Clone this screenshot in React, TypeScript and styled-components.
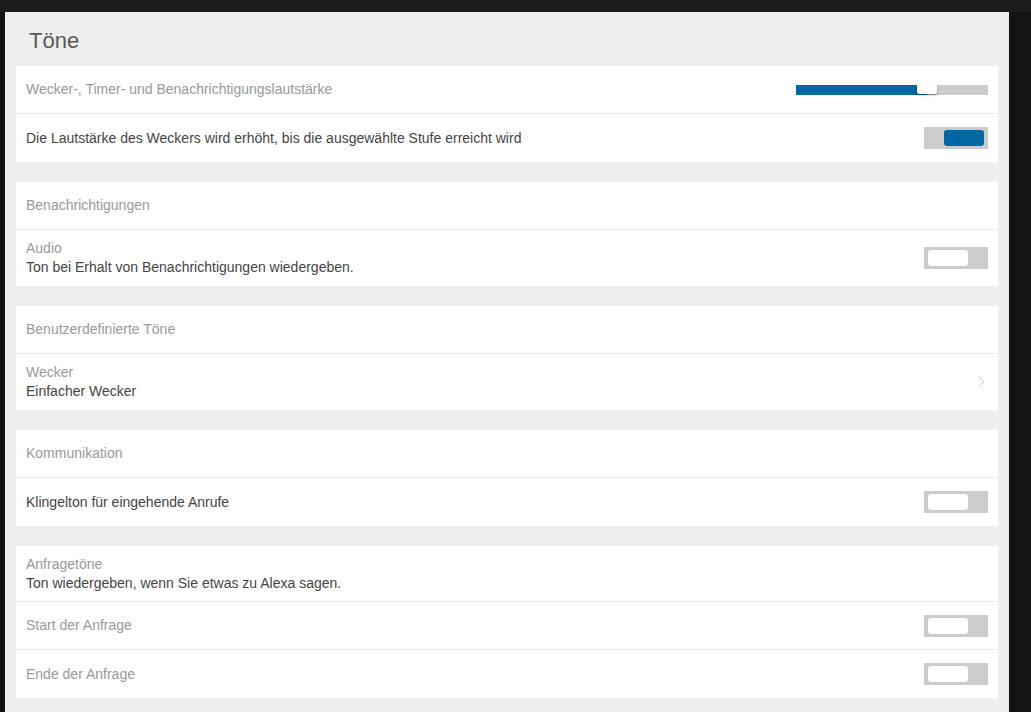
import React, { useState } from 'react';
import styled, { createGlobalStyle } from 'styled-components';

const GlobalStyle = createGlobalStyle`
  html, body {
    margin: 0;
    padding: 0;
    background: #141414;
    font-family: "Liberation Sans", Arial, sans-serif;
    overflow: hidden;
  }
`;

const Page = styled.div`
  width: 1031px;
  height: 712px;
  display: flex;
  flex-direction: column;
  background: #141414;
`;

const TopStrip = styled.div`
  height: 12px;
  flex-shrink: 0;
  background: #1b1b1b;
`;

const Body = styled.div`
  flex: 1;
  display: flex;
  background: linear-gradient(to right, #111 0, #111 5px, transparent 5px);
`;

const Panel = styled.div`
  margin-left: 5px;
  width: 1004px;
  box-sizing: border-box;
  padding: 0 11px;
  background: #eeeeee;
  display: flex;
  flex-direction: column;
  gap: 20px;
`;

const Title = styled.h1`
  margin: 0 0 -20px;
  height: 54px;
  box-sizing: border-box;
  padding: 16px 0 0 13px;
  font-size: 22px;
  font-weight: normal;
  color: #5a5a5a;
`;

const Card = styled.div`
  background: #fff;
  display: flex;
  flex-direction: column;
`;

const Row = styled.div<{ tall?: boolean }>`
  height: ${p => (p.tall ? 56 : 48)}px;
  box-sizing: border-box;
  padding: 0 10px;
  display: flex;
  align-items: center;
  justify-content: space-between;
  &:not(:last-child) {
    border-bottom: 1px solid #ececec;
  }
`;

const Texts = styled.div`
  display: flex;
  flex-direction: column;
  font-size: 14px;
  line-height: 19px;
`;

const Label = styled.span<{ muted?: boolean }>`
  color: ${p => (p.muted ? '#999' : '#444')};
`;

const Track = styled.div`
  position: relative;
  width: 192px;
  height: 10px;
  background: #cccccc;
`;

const Fill = styled.div`
  height: 100%;
  background: #0067a5;
`;

const Thumb = styled.div`
  position: absolute;
  top: -2px;
  width: 20px;
  height: 11px;
  border-radius: 2px;
  background: #fff;
  box-shadow: 0 1px 2px rgba(0, 0, 0, 0.45);
  transform: translateX(-50%);
`;

const ToggleBox = styled.button<{ on: boolean }>`
  width: 64px;
  height: 22px;
  padding: 3px 4px;
  border: none;
  background: #cccccc;
  display: flex;
  justify-content: ${p => (p.on ? 'flex-end' : 'flex-start')};
  cursor: pointer;
  box-sizing: border-box;
`;

const Knob = styled.span<{ on: boolean }>`
  width: 40px;
  height: 16px;
  border-radius: 3px;
  background: ${p => (p.on ? '#0067a5' : '#fff')};
`;

const Chevron = styled.svg`
  margin-right: 3px;
`;

const Toggle: React.FC<{ initial?: boolean }> = ({ initial = false }) => {
  const [on, setOn] = useState(initial);
  return (
    <ToggleBox on={on} onClick={() => setOn(!on)}>
      <Knob on={on} />
    </ToggleBox>
  );
};

const Slider: React.FC<{ value: number }> = ({ value }) => (
  <Track>
    <Fill style={{ width: `${value}%` }} />
    <Thumb style={{ left: `${value}%` }} />
  </Track>
);

export default function App() {
  return (
    <>
      <GlobalStyle />
      <Page>
        <TopStrip />
        <Body>
          <Panel>
            <Title>Töne</Title>

            <Card>
              <Row>
                <Texts>
                  <Label muted>Wecker-, Timer- und Benachrichtigungslautstärke</Label>
                </Texts>
                <Slider value={68} />
              </Row>
              <Row>
                <Texts>
                  <Label>Die Lautstärke des Weckers wird erhöht, bis die ausgewählte Stufe erreicht wird</Label>
                </Texts>
                <Toggle initial />
              </Row>
            </Card>

            <Card>
              <Row>
                <Texts>
                  <Label muted>Benachrichtigungen</Label>
                </Texts>
              </Row>
              <Row tall>
                <Texts>
                  <Label muted>Audio</Label>
                  <Label>Ton bei Erhalt von Benachrichtigungen wiedergeben.</Label>
                </Texts>
                <Toggle />
              </Row>
            </Card>

            <Card>
              <Row>
                <Texts>
                  <Label muted>Benutzerdefinierte Töne</Label>
                </Texts>
              </Row>
              <Row tall>
                <Texts>
                  <Label muted>Wecker</Label>
                  <Label>Einfacher Wecker</Label>
                </Texts>
                <Chevron width="7" height="12" viewBox="0 0 7 12">
                  <path d="M1 1l5 5-5 5" fill="none" stroke="#cfcfcf" strokeWidth="1" />
                </Chevron>
              </Row>
            </Card>

            <Card>
              <Row>
                <Texts>
                  <Label muted>Kommunikation</Label>
                </Texts>
              </Row>
              <Row>
                <Texts>
                  <Label>Klingelton für eingehende Anrufe</Label>
                </Texts>
                <Toggle />
              </Row>
            </Card>

            <Card>
              <Row tall>
                <Texts>
                  <Label muted>Anfragetöne</Label>
                  <Label>Ton wiedergeben, wenn Sie etwas zu Alexa sagen.</Label>
                </Texts>
              </Row>
              <Row>
                <Texts>
                  <Label muted>Start der Anfrage</Label>
                </Texts>
                <Toggle />
              </Row>
              <Row>
                <Texts>
                  <Label muted>Ende der Anfrage</Label>
                </Texts>
                <Toggle />
              </Row>
            </Card>
          </Panel>
        </Body>
      </Page>
    </>
  );
}
